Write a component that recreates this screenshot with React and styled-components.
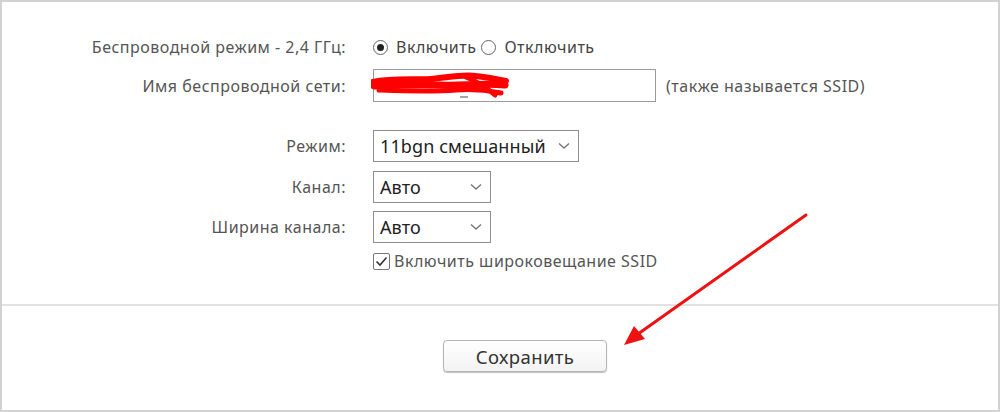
import React from "react";
import styled, { createGlobalStyle } from "styled-components";

const Global = createGlobalStyle`
  html, body { margin: 0; padding: 0; background: #fff; }
  body { font-family: "Noto Sans", "Liberation Sans", Arial, sans-serif; }
`;

const Frame = styled.div`
  position: relative;
  box-sizing: border-box;
  width: 1000px;
  height: 412px;
  border: 2px solid #d2d2d2;
  background: #fff;
  overflow: hidden;
`;

const Form = styled.div`
  display: flex;
  flex-direction: column;
  padding-top: 31px;
`;

const Row = styled.div`
  display: grid;
  grid-template-columns: 344px auto;
  column-gap: 27px;
  align-items: center;
  height: ${(p) => p.$h || 32}px;
  margin-top: ${(p) => p.$mt || 0}px;
`;

const Label = styled.div`
  text-align: right;
  font-size: 16px;
  letter-spacing: 0.5px;
  color: #555;
  white-space: nowrap;
`;

const Controls = styled.div`
  display: flex;
  align-items: center;
  font-size: 16px;
  letter-spacing: 0.5px;
  color: #444;
  white-space: nowrap;
`;

const RadioLabel = styled.label`
  display: inline-flex;
  align-items: center;
  gap: 8px;
  margin-right: 5px;
`;

const RadioCircle = styled.span`
  box-sizing: border-box;
  width: 15px;
  height: 15px;
  border-radius: 50%;
  border: 1.5px solid #666;
  display: inline-flex;
  align-items: center;
  justify-content: center;
  &::after {
    content: "";
    width: 7px;
    height: 7px;
    border-radius: 50%;
    background: ${(p) => (p.$on ? "#222" : "transparent")};
  }
`;

const TextField = styled.div`
  position: relative;
  box-sizing: border-box;
  width: 283px;
  height: 33px;
  border: 1.5px solid #9a9a9a;
  background: #fff;
`;

const Scribble = styled.svg`
  position: absolute;
  left: -3px;
  top: 1px;
`;

const Hint = styled.span`
  margin-left: 10px;
  color: #555;
`;

const Select = styled.div`
  box-sizing: border-box;
  width: ${(p) => p.$w}px;
  height: 32px;
  border: 1.5px solid #8e8e8e;
  display: flex;
  align-items: center;
  justify-content: space-between;
  padding: 0 8px 0 6px;
  font-size: 18px;
  letter-spacing: 0.1px;
  color: #222;
  background: #fff;
`;

const Chevron = styled.svg`
  flex: none;
`;

const CheckLabel = styled.label`
  display: inline-flex;
  align-items: center;
  gap: 4px;
  color: #555;
`;

const CheckBox = styled.span`
  box-sizing: border-box;
  width: 17px;
  height: 17px;
  border: 1.5px solid #777;
  border-radius: 2px;
  display: inline-flex;
  align-items: center;
  justify-content: center;
  background: #fff;
`;

const Divider = styled.div`
  height: 2px;
  background: #e2e2e2;
  margin-top: 32px;
`;

const Footer = styled.div`
  display: flex;
  padding-left: 441px;
  margin-top: 34px;
`;

const Button = styled.button`
  box-sizing: border-box;
  width: 164px;
  height: 32px;
  border: 1px solid #b5b5b5;
  border-radius: 4px;
  background: linear-gradient(#ffffff, #f3f3f3);
  box-shadow: 0 1px 1px rgba(0, 0, 0, 0.25);
  font-family: "Noto Sans", "Liberation Sans", Arial, sans-serif;
  font-size: 18.5px;
  letter-spacing: 0.4px;
  color: #333;
  padding: 0;
`;

const Arrow = styled.svg`
  position: absolute;
  left: 0;
  top: 0;
  pointer-events: none;
`;

const Down = () => (
  <Chevron width="12" height="8" viewBox="0 0 12 8">
    <path d="M1 1.5 L6 6 L11 1.5" fill="none" stroke="#777" strokeWidth="1.4" />
  </Chevron>
);

export default function App() {
  return (
    <>
      <Global />
      <Frame>
        <Form>
          <Row $h={28}>
            <Label>Беспроводной режим - 2,4 ГГц:</Label>
            <Controls>
              <RadioLabel>
                <RadioCircle $on />
                Включить
              </RadioLabel>
              <RadioLabel>
                <RadioCircle />
                Отключить
              </RadioLabel>
            </Controls>
          </Row>
          <Row $h={33} $mt={8}>
            <Label>Имя беспроводной сети:</Label>
            <Controls>
              <TextField>
                <Scribble width="140" height="30" viewBox="0 0 140 30">
                  <path
                    d="M2 11 C20 7 40 9 60 8 C75 7 90 3 105 5 C115 6 125 8 135 10"
                    stroke="#f00"
                    strokeWidth="6"
                    fill="none"
                    strokeLinecap="round"
                  />
                  <path
                    d="M3 15 C25 14 45 13 70 14 C90 15 110 12 134 14"
                    stroke="#f00"
                    strokeWidth="7"
                    fill="none"
                    strokeLinecap="round"
                  />
                  <path
                    d="M8 19 C35 20 60 21 85 19 C100 18 115 19 130 22 M95 6 C105 10 115 16 124 24"
                    stroke="#f00"
                    strokeWidth="5"
                    fill="none"
                    strokeLinecap="round"
                  />
                  <path d="M89 26 L97 26" stroke="#888" strokeWidth="1.5" />
                </Scribble>
              </TextField>
              <Hint>(также называется SSID)</Hint>
            </Controls>
          </Row>
          <Row $mt={28}>
            <Label>Режим:</Label>
            <Controls>
              <Select $w={206}>
                11bgn смешанный
                <Down />
              </Select>
            </Controls>
          </Row>
          <Row $mt={9}>
            <Label>Канал:</Label>
            <Controls>
              <Select $w={118}>
                Авто
                <Down />
              </Select>
            </Controls>
          </Row>
          <Row $mt={8}>
            <Label>Ширина канала:</Label>
            <Controls>
              <Select $w={118}>
                Авто
                <Down />
              </Select>
            </Controls>
          </Row>
          <Row $h={22} $mt={7}>
            <span />
            <Controls>
              <CheckLabel>
                <CheckBox>
                  <svg width="13" height="11" viewBox="0 0 13 11">
                    <path d="M1.5 5.5 L5 9 L11.5 1.5" fill="none" stroke="#333" strokeWidth="1.6" />
                  </svg>
                </CheckBox>
                Включить широковещание SSID
              </CheckLabel>
            </Controls>
          </Row>
        </Form>
        <Divider />
        <Footer>
          <Button>Сохранить</Button>
        </Footer>
        <Arrow width="1000" height="412" viewBox="0 0 1000 412">
          <line x1="804" y1="213" x2="636" y2="332" stroke="#ee1111" strokeWidth="3" strokeLinecap="round" />
          <path d="M622 343 L632 324 L643 337 Z" fill="#ee1111" />
        </Arrow>
      </Frame>
    </>
  );
}
